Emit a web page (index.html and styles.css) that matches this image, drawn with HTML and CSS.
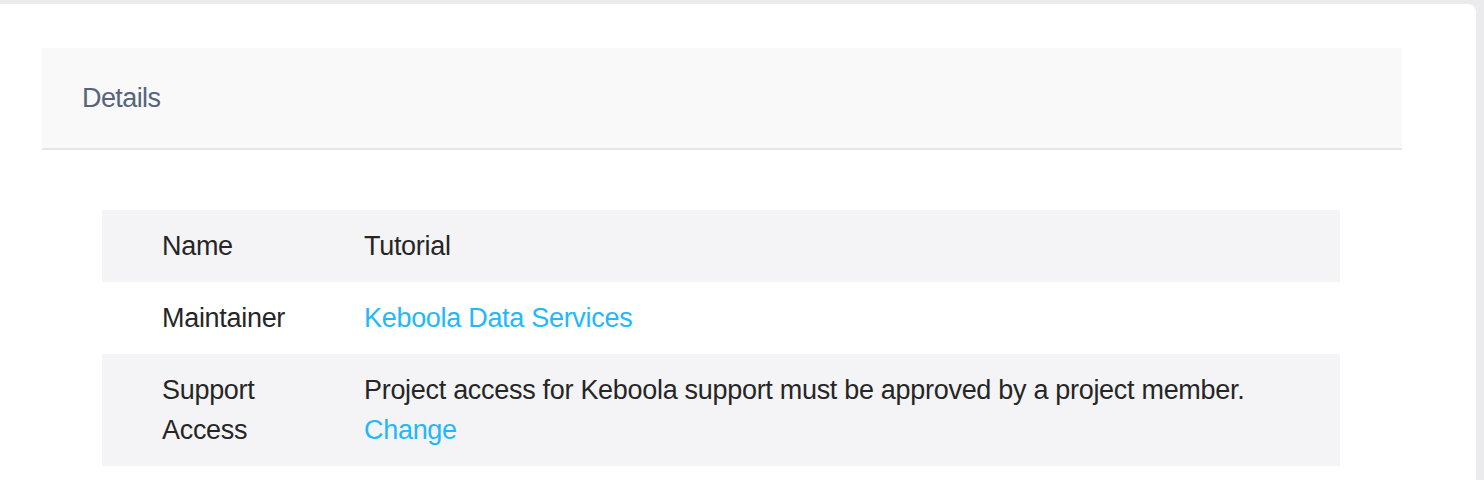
FILE: index.html
```html
<!DOCTYPE html>
<html lang="en">
<head>
<meta charset="utf-8">
<title>Details</title>
<link rel="stylesheet" href="styles.css">
</head>
<body>
<div class="card">
  <section class="panel">
    <header class="panel-heading">Details</header>
    <div class="panel-body">
      <table class="details">
        <tbody>
          <tr>
            <td class="label">Name</td>
            <td class="value">Tutorial</td>
          </tr>
          <tr>
            <td class="label">Maintainer</td>
            <td class="value"><a href="#">Keboola Data Services</a></td>
          </tr>
          <tr>
            <td class="label">Support Access</td>
            <td class="value">Project access for Keboola support must be approved by a project member.<br><a href="#">Change</a></td>
          </tr>
        </tbody>
      </table>
    </div>
  </section>
</div>
</body>
</html>
```

FILE: styles.css
```css
html, body {
  margin: 0;
  height: 100%;
}
body {
  background: #ebebee;
  padding: 4px 8px 0 0;
  box-sizing: border-box;
  overflow: hidden;
  font-family: "Liberation Sans", Arial, sans-serif;
  font-size: 27px;
  letter-spacing: -0.3px;
  line-height: 40px;
  color: #262626;
}
.card {
  background: #fff;
  border-top-right-radius: 8px;
  min-height: 100%;
  padding: 44px 74px 0 42px;
  box-sizing: border-box;
}
.panel-heading {
  background: #f9f9fa;
  border-bottom: 2px solid #e6e6ea;
  padding: 30px 40px;
  color: #56657a;
  letter-spacing: -0.6px;
}
.panel-body {
  padding: 60px 62px 60px 60px;
}
.details {
  width: 100%;
  border-collapse: collapse;
}
.details td {
  padding: 16px;
  vertical-align: top;
}
.details tr:nth-child(odd) td {
  background: #f4f4f6;
}
.details td.label {
  width: 170px;
  padding-left: 60px;
}
.details a {
  color: #22b8fb;
  text-decoration: none;
}
```
